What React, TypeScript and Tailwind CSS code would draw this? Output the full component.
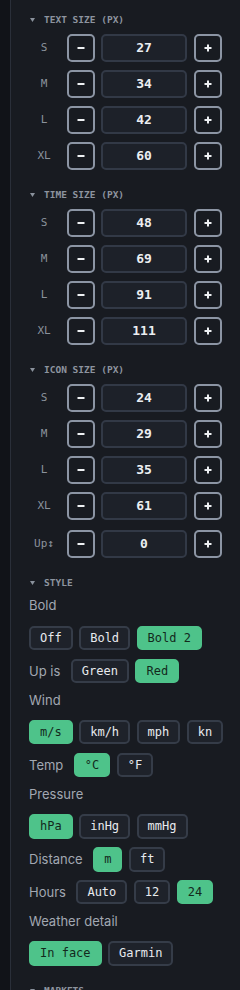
import React from "react";

const MONO = "font-['DejaVu_Sans_Mono',monospace]";
const SANS = "font-['Inter','Noto_Sans',sans-serif]";

type Row = { label: string; value: number };

const SECTIONS: { title: string; rows: Row[] }[] = [
  {
    title: "Text size (px)",
    rows: [
      { label: "S", value: 27 },
      { label: "M", value: 34 },
      { label: "L", value: 42 },
      { label: "XL", value: 60 },
    ],
  },
  {
    title: "Time size (px)",
    rows: [
      { label: "S", value: 48 },
      { label: "M", value: 69 },
      { label: "L", value: 91 },
      { label: "XL", value: 111 },
    ],
  },
  {
    title: "Icon size (px)",
    rows: [
      { label: "S", value: 24 },
      { label: "M", value: 29 },
      { label: "L", value: 35 },
      { label: "XL", value: 61 },
    ],
  },
];

function SectionHeader({ title, dot }: { title: string; dot?: boolean }) {
  return (
    <div className="flex h-3 items-center">
      <svg width="5" height="4" viewBox="0 0 5 4" className="ml-[1px] text-[#8a919c]">
        <path d="M0 0 H5 L2.5 4 Z" fill="currentColor" />
      </svg>
      <span
        className={`${MONO} ml-[9px] text-[9.5px] font-bold uppercase leading-3 text-[#8d949f]`}
      >
        {title}
      </span>
      {dot && <span className="ml-auto mr-[3px] mt-[8px] h-[10px] w-[10px] rounded-full bg-[#4ec38a]" />}
    </div>
  );
}

function StepButton({ plus }: { plus?: boolean }) {
  return (
    <button className="flex h-7 w-7 items-center justify-center rounded-[5px] border-2 border-[#8c95a4] text-[#eef0f3]">
      <svg width="10" height="10" viewBox="0 0 10 10">
        <path d="M1.5 5 H8.5" stroke="currentColor" strokeWidth="2" />
        {plus && <path d="M5 1.5 V8.5" stroke="currentColor" strokeWidth="2" />}
      </svg>
    </button>
  );
}

function Stepper({ label, value, className = "" }: Row & { className?: string }) {
  return (
    <div className={`flex h-7 items-center ${className}`}>
      <span className={`${MONO} w-[30px] text-center text-[11px] text-[#8b929c]`}>{label}</span>
      <div className="ml-2">
        <StepButton />
      </div>
      <div
        className={`${MONO} ml-1.5 flex h-7 w-[86px] items-center justify-center rounded-[5px] border-2 border-[#323946] bg-[#1d2129] text-[13px] font-semibold text-[#eceef1]`}
      >
        {value}
      </div>
      <div className="ml-[7px]">
        <StepButton plus />
      </div>
    </div>
  );
}

function Opt({ text, active }: { text: string; active?: boolean }) {
  return (
    <button
      className={`${MONO} flex h-[24.5px] items-center rounded-[5px] border-2 px-[9px] text-[12px] ${
        active
          ? "border-[#4ec38a] bg-[#4ec38a] text-[#13291c]"
          : "border-[#353c48] bg-[#1e222a] text-[#e8eaee]"
      }`}
    >
      {text}
    </button>
  );
}

function Label({ text }: { text: string }) {
  return <div className={`${SANS} pb-1 text-[13px] leading-4 text-[#a2a8b2]`}>{text}</div>;
}

function InlineRow({ label, opts, active }: { label: string; opts: string[]; active: number }) {
  return (
    <div className="flex items-center">
      <span className={`${SANS} mr-[10.5px] text-[13px] leading-4 text-[#a2a8b2]`}>{label}</span>
      <div className="flex gap-[6.5px]">
        {opts.map((o, i) => (
          <Opt key={o} text={o} active={i === active} />
        ))}
      </div>
    </div>
  );
}

function OptRow({ opts, active }: { opts: string[]; active: number }) {
  return (
    <div className="flex gap-[6.5px]">
      {opts.map((o, i) => (
        <Opt key={o} text={o} active={i === active} />
      ))}
    </div>
  );
}

export default function App() {
  return (
    <div className="flex h-[990px] overflow-hidden bg-[#111318]">
      <div className="w-[10px] shrink-0" />
      <div className="w-[230px] shrink-0 border-l border-[#2a2f39] bg-[#181b21] pl-[18px] pr-[18px] pt-[14px]">
        {SECTIONS.map((s, i) => (
          <div key={s.title} className={`flex flex-col gap-2 ${i > 0 ? "mt-[19px]" : ""}`}>
            <SectionHeader title={s.title} />
            {s.rows.map((r) => (
              <Stepper key={r.label} label={r.label} value={r.value} />
            ))}
            {i === 2 && <Stepper label="Up↕" value={0} className="mt-0.5" />}
          </div>
        ))}

        {/* Style */}
        <div className="mt-[19px] flex flex-col gap-[8.4px]">
          <SectionHeader title="Style" />
          <Label text="Bold" />
          <OptRow opts={["Off", "Bold", "Bold 2"]} active={2} />
          <InlineRow label="Up is" opts={["Green", "Red"]} active={1} />
          <Label text="Wind" />
          <OptRow opts={["m/s", "km/h", "mph", "kn"]} active={0} />
          <InlineRow label="Temp" opts={["°C", "°F"]} active={0} />
          <Label text="Pressure" />
          <OptRow opts={["hPa", "inHg", "mmHg"]} active={0} />
          <InlineRow label="Distance" opts={["m", "ft"]} active={0} />
          <InlineRow label="Hours" opts={["Auto", "12", "24"]} active={2} />
          <Label text="Weather detail" />
          <OptRow opts={["In face", "Garmin"]} active={0} />
        </div>

        <div className="mt-[19px]">
          <SectionHeader title="Markets" dot />
        </div>
      </div>
    </div>
  );
}
